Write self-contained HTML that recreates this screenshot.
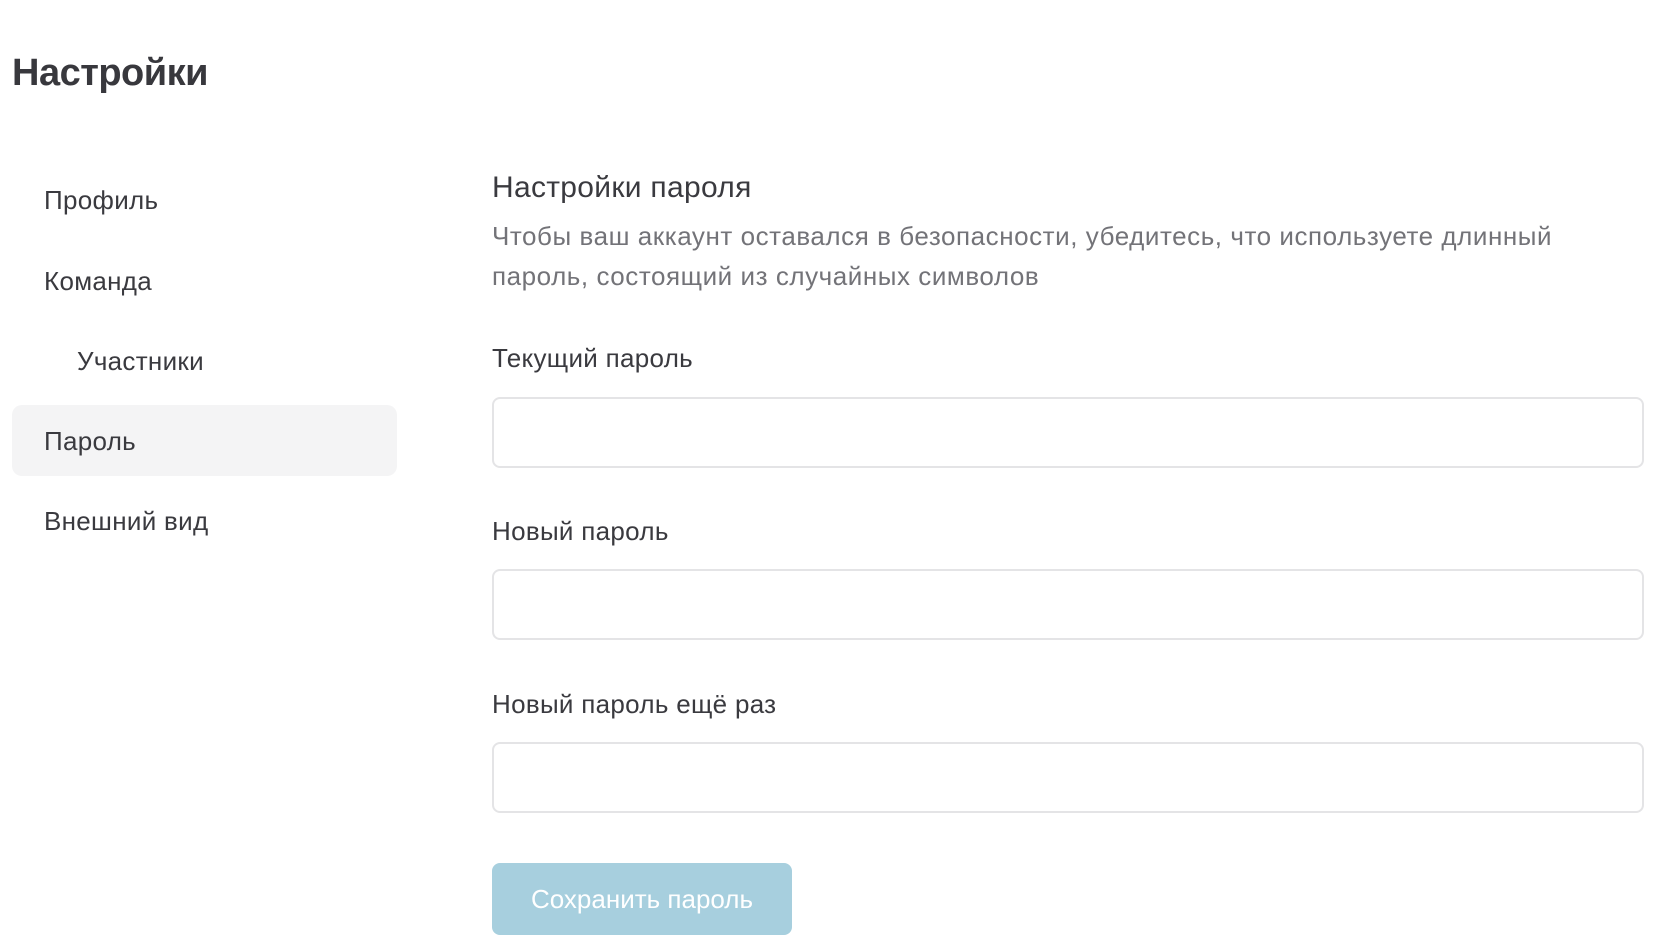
<!DOCTYPE html>
<html><head><meta charset="utf-8"><style>
body{margin:0;width:1658px;height:952px;background:#fff;font-family:"Liberation Sans","DejaVu Sans",sans-serif;color:#3a3a3f;position:relative;overflow:hidden}
.a{position:absolute;white-space:nowrap}
h1{position:absolute;left:12px;top:52px;margin:0;font-size:38px;font-weight:bold;letter-spacing:-0.5px;color:#38383d}
.nav{font-size:26px;line-height:30px;letter-spacing:0.3px}
.sel{position:absolute;left:12px;top:405px;width:385px;height:71px;background:#f4f4f5;border-radius:10px}
.inp{position:absolute;left:492px;width:1152px;height:71px;border:2px solid #e4e4e6;border-radius:8px;box-sizing:border-box}
.lbl{font-size:26px;line-height:30px;letter-spacing:0.3px}
.btn{position:absolute;left:492px;top:863px;width:300px;height:72px;background:#a7cfde;border-radius:8px;color:#fff;font-size:26px;line-height:72px;text-align:center}
</style></head><body>
<h1>Настройки</h1>
<div class="sel"></div>
<div class="a nav" style="left:44px;top:185px">Профиль</div>
<div class="a nav" style="left:44px;top:266px">Команда</div>
<div class="a nav" style="left:77px;top:346px">Участники</div>
<div class="a nav" style="left:44px;top:426px">Пароль</div>
<div class="a nav" style="left:44px;top:506px">Внешний вид</div>
<div class="a" style="left:492px;top:171px;font-size:30px;line-height:34px;letter-spacing:0.3px">Настройки пароля</div>
<div class="a" style="left:492px;top:216px;font-size:26px;line-height:40px;color:#737378;white-space:normal;width:1120px;letter-spacing:0.55px">Чтобы ваш аккаунт оставался в безопасности, убедитесь, что используете длинный пароль, состоящий из случайных символов</div>
<div class="a lbl" style="left:492px;top:343px">Текущий пароль</div>
<div class="inp" style="top:397px"></div>
<div class="a lbl" style="left:492px;top:516px">Новый пароль</div>
<div class="inp" style="top:569px"></div>
<div class="a lbl" style="left:492px;top:689px">Новый пароль ещё раз</div>
<div class="inp" style="top:742px"></div>
<div class="btn">Сохранить пароль</div>
</body></html>
